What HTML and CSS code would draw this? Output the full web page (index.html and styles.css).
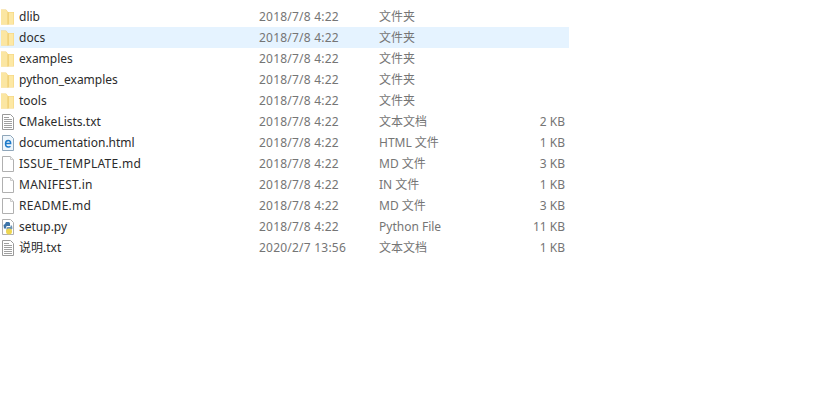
FILE: index.html
```html
<!DOCTYPE html>
<html lang="zh-CN">
<head>
  <meta charset="UTF-8">
  <title>dlib</title>
  <link rel="stylesheet" href="styles.css">
</head>
<body>
  <svg class="defs" width="0" height="0">
    <symbol id="folder" viewBox="0 0 16 16">
      <path d="M1 .5h5l2 2.500h6v12.500H1z" fill="#f3d27a"/>
      <path d="M1 1h4.800L8 3.800V15.500H1z" fill="#fbe6a2"/>
      <path d="M8.500 3.500h5v11.500h-5z" fill="#fde8a4"/>
      <path d="M8 3.500v12" stroke="#ecca68" fill="none"/>
    </symbol>
    <symbol id="text" viewBox="0 0 16 16">
      <path d="M2.500 .5h8l3 3v12h-11z" fill="#fff" stroke="#9a9a9a"/>
      <path d="M4 3.500h5M4 5.500h8M4 7.500h8M4 9.500h8M4 11.500h8M4 13.500h8" stroke="#a0a0a0"/>
    </symbol>
    <symbol id="blank" viewBox="0 0 16 16">
      <path d="M2.500 .5h8l3 3v12h-11z" fill="#fff" stroke="#b0b0b0"/>
      <path d="M10.500 .5v3h3" fill="#f2f2f2" stroke="#cccccc"/>
    </symbol>
    <symbol id="html" viewBox="0 0 16 16">
      <path d="M2.500 .5h8l3 3v12h-11z" fill="#eef6fc" stroke="#8fa6ba"/>
      <path d="M5.500 8.500h5.200c0-2-1.100-3-2.500-3s-2.700 1.200-2.700 3.200 1.200 3.300 2.800 3.300c1 0 1.700-.3 2.200-.8" fill="none" stroke="#1b79c9" stroke-width="1.400"/>
    </symbol>
    <symbol id="python" viewBox="0 0 16 16">
      <path d="M2.500 .5h8l3 3v12h-11z" fill="#fff" stroke="#b0b0b0"/>
      <path d="M6 3h3l1 1v3H6.500L6 9.500H4L3.500 6 5 5z" fill="#3d74a8"/>
      <path d="M10.500 6.500h1.500l.5 3-1.500 1.500H7.500v1.500H6.500V9l1-1h3z" fill="#6d93b5"/>
      <circle cx="9" cy="12.500" r="3" fill="#eed650"/>
    </symbol>
  </svg>

  <div class="file-list">
    <div class="row"><svg class="icon"><use href="#folder"/></svg><span class="name">dlib</span><span class="date">2018/7/8 4:22</span><span class="type">文件夹</span><span class="size"></span></div>
    <div class="row selected"><svg class="icon"><use href="#folder"/></svg><span class="name">docs</span><span class="date">2018/7/8 4:22</span><span class="type">文件夹</span><span class="size"></span></div>
    <div class="row"><svg class="icon"><use href="#folder"/></svg><span class="name">examples</span><span class="date">2018/7/8 4:22</span><span class="type">文件夹</span><span class="size"></span></div>
    <div class="row"><svg class="icon"><use href="#folder"/></svg><span class="name">python_examples</span><span class="date">2018/7/8 4:22</span><span class="type">文件夹</span><span class="size"></span></div>
    <div class="row"><svg class="icon"><use href="#folder"/></svg><span class="name">tools</span><span class="date">2018/7/8 4:22</span><span class="type">文件夹</span><span class="size"></span></div>
    <div class="row"><svg class="icon"><use href="#text"/></svg><span class="name">CMakeLists.txt</span><span class="date">2018/7/8 4:22</span><span class="type">文本文档</span><span class="size">2 KB</span></div>
    <div class="row"><svg class="icon"><use href="#html"/></svg><span class="name">documentation.html</span><span class="date">2018/7/8 4:22</span><span class="type">HTML 文件</span><span class="size">1 KB</span></div>
    <div class="row"><svg class="icon"><use href="#blank"/></svg><span class="name caps">ISSUE_TEMPLATE.md</span><span class="date">2018/7/8 4:22</span><span class="type">MD 文件</span><span class="size">3 KB</span></div>
    <div class="row"><svg class="icon"><use href="#blank"/></svg><span class="name caps">MANIFEST.in</span><span class="date">2018/7/8 4:22</span><span class="type">IN 文件</span><span class="size">1 KB</span></div>
    <div class="row"><svg class="icon"><use href="#blank"/></svg><span class="name caps">README.md</span><span class="date">2018/7/8 4:22</span><span class="type">MD 文件</span><span class="size">3 KB</span></div>
    <div class="row"><svg class="icon"><use href="#python"/></svg><span class="name">setup.py</span><span class="date">2018/7/8 4:22</span><span class="type">Python File</span><span class="size">11 KB</span></div>
    <div class="row"><svg class="icon"><use href="#text"/></svg><span class="name">说明.txt</span><span class="date">2020/2/7 13:56</span><span class="type">文本文档</span><span class="size">1 KB</span></div>
  </div>
</body>
</html>
```

FILE: styles.css
```css
body {
  margin: 0;
  background: #fff;
  font-family: "Noto Sans", "Noto Sans CJK SC", sans-serif;
  font-size: 12px;
}
.defs {
  display: block;
}
.file-list {
  width: 569px;
  padding-top: 6px;
}
.row {
  display: grid;
  grid-template-columns: 19px 240px 120px 1fr 56px;
  height: 21px;
  line-height: 21px;
  align-items: center;
  padding-right: 4px;
  box-sizing: border-box;
  white-space: nowrap;
}
.selected {
  background: #e5f3ff;
}
.icon {
  width: 16px;
  height: 16px;
}
.name {
  color: #2b2b2b;
}
.caps {
  letter-spacing: 0.25px;
}
.date,
.type,
.size {
  color: #757575;
}
.date {
  letter-spacing: 0.22px;
}
.size {
  grid-column: 5;
  text-align: right;
}
```
